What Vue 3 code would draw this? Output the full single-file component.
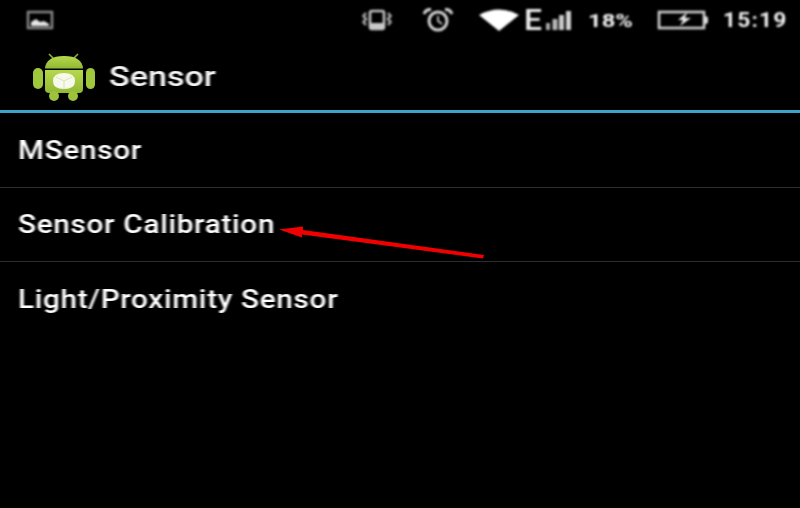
<template>
  <div class="screen">
    <div class="status-bar">
      <svg class="picture-icon" width="28" height="20" viewBox="0 0 28 20">
        <rect x="2" y="2" width="24" height="16" fill="none" stroke="#8c8c8c" stroke-width="2.4" />
        <path d="M5 16 L5 12 L10 9 L14 12 L18 11 L23 14 L23 16 Z" fill="#e6e6e6" />
      </svg>
      <div class="status-right">
        <svg class="vibrate-icon" width="30" height="22" viewBox="0 0 30 22">
          <rect x="8" y="2" width="14" height="18" rx="2" fill="none" stroke="#c4c4c4" stroke-width="2.6" />
          <rect x="8" y="14" width="14" height="6" fill="#c8c8c8" />
          <path d="M4 4 L1.500 7 L4 10 L1.500 13 L4 16 M26 4 L28.500 7 L26 10 L28.500 13 L26 16" fill="none" stroke="#a8a8a8" stroke-width="2.6" />
        </svg>
        <svg class="alarm-icon" width="32" height="24" viewBox="0 0 32 24">
          <circle cx="16" cy="13" r="9" fill="none" stroke="#d4d4d4" stroke-width="3" />
          <path d="M16 8 L16 13 L20 16" fill="none" stroke="#c4c4c4" stroke-width="1.800" />
          <path d="M2 6 Q4 1 9 1.500 M30 6 Q28 1 23 1.500" fill="none" stroke="#d4d4d4" stroke-width="3" />
        </svg>
        <svg class="wifi-icon" width="40" height="22" viewBox="0 0 40 22">
          <path d="M0 6 Q20 -5 40 6 L20 22 Z" fill="#fff" />
        </svg>
        <span class="network">E</span>
        <svg class="signal-icon" width="25" height="20" viewBox="0 0 25 20">
          <rect x="0" y="13" width="4" height="7" fill="#a8a8a8" />
          <rect x="6.500" y="9" width="5" height="11" fill="#b8b8b8" />
          <rect x="13" y="5" width="5" height="15" fill="#c8c8c8" />
          <rect x="20" y="1" width="5" height="19" fill="#d0d0d0" />
        </svg>
        <span class="percent">18%</span>
        <svg class="battery-icon" width="52" height="22" viewBox="0 0 52 22">
          <rect x="2" y="3" width="45" height="16" fill="none" stroke="#cfcfcf" stroke-width="2.6" />
          <path d="M47 7 Q51 7 51 9 L51 13 Q51 15 47 15" fill="#dcdcdc" />
          <path d="M30 3.500 L21 11 L26 11 L23 17 L34 9 L28 9 Z" fill="#ececec" />
        </svg>
        <span class="clock">15:19</span>
      </div>
    </div>

    <div class="action-bar">
      <svg class="app-icon" width="64" height="48" viewBox="0 0 64 48">
        <defs>
          <linearGradient id="droid" x1="0" y1="0" x2="0" y2="1">
            <stop offset="0" stop-color="#b4d94c" />
            <stop offset="1" stop-color="#93b934" />
          </linearGradient>
        </defs>
        <rect x="1" y="15" width="10" height="21" rx="5" fill="#a0c83c" />
        <rect x="54" y="15" width="9" height="21" rx="4.500" fill="#a0c83c" />
        <path d="M17 1 L21 5 M46 1 L42 5" stroke="#8fb334" stroke-width="1.600" />
        <path d="M13 15.500 Q14 3 32 3 Q50 3 51 15.500 Z" fill="url(#droid)" />
        <path d="M13 17 H51 V36 Q51 40 47 40 H17 Q13 40 13 36 Z" fill="url(#droid)" />
        <rect x="17" y="38" width="10" height="10" rx="5" fill="#9cc33b" />
        <rect x="36" y="38" width="10" height="10" rx="5" fill="#9cc33b" />
        <path d="M21 28 Q21 20 32 20 Q43 20 43 28 Q43 36 32 36 Q21 36 21 28 Z" fill="#f6f9ec" />
        <path d="M32 28 L32 36 M32 28 L24 24 M32 28 L40 24" stroke="#d8e6b4" stroke-width="1" />
      </svg>
      <span class="title">Sensor</span>
    </div>

    <ul class="menu">
      <li v-for="item in items" :key="item" class="menu-item">
        <span class="menu-label">{{ item }}</span>
      </li>
    </ul>

    <svg class="arrow" width="220" height="40" viewBox="0 0 220 40">
      <path d="M 11 7.500 L 35 4.500 L 35 8 L 216 33 L 215 36.500 L 34 12.500 L 34 15.500 Z" fill="#f00000" />
    </svg>
  </div>
</template>

<script setup>
const items = ['MSensor', 'Sensor Calibration', 'Light/Proximity Sensor']
</script>

<style>
html, body {
  margin: 0;
  background: #000;
}
</style>

<style scoped>
.screen {
  position: relative;
  width: 800px;
  height: 508px;
  overflow: hidden;
  background: #000;
  color: #f0f0f0;
  font-family: Roboto, "Liberation Sans", sans-serif;
}
.status-bar {
  height: 38px;
  display: flex;
  align-items: center;
  justify-content: space-between;
  padding: 2px 13px 0 26px;
  box-sizing: border-box;
  filter: blur(0.8px);
}
.status-right {
  display: flex;
  align-items: center;
}
.vibrate-icon {
  margin-right: 30px;
}
.alarm-icon {
  margin-right: 25px;
}
.network {
  display: inline-block;
  width: 17px;
  font-size: 29px;
  line-height: 30px;
  font-weight: 500;
  color: #eee;
  margin-left: 5px;
  margin-right: 5px;
  transform: scaleX(1.1);
  transform-origin: left center;
}
.signal-icon {
  margin-right: 17px;
}
.percent {
  display: inline-block;
  width: 45px;
  font-size: 19px;
  font-weight: 700;
  color: #f0f0f0;
  margin-right: 24px;
  transform: scaleX(1.25);
  transform-origin: left center;
}
.battery-icon {
  margin-right: 14px;
}
.clock {
  display: inline-block;
  width: 64px;
  font-size: 20px;
  font-weight: 700;
  letter-spacing: 1px;
  color: #f0f0f0;
  transform: scaleX(1.14);
  transform-origin: left center;
}
.action-bar {
  height: 72px;
  display: flex;
  align-items: center;
  padding-left: 32px;
  border-bottom: 3px solid #3ea3c9;
}
.app-icon {
  margin-right: 13px;
  margin-top: 5px;
  filter: blur(0.7px);
}
.title {
  display: inline-block;
  font-size: 27.5px;
  font-weight: 500;
  color: #f4f4f4;
  margin-top: 5px;
  transform: scaleX(1.24);
  transform-origin: left center;
  filter: blur(0.7px);
}
.menu {
  list-style: none;
  margin: 0;
  padding: 0;
}
.menu-item {
  height: 74.5px;
  display: flex;
  align-items: center;
  padding-left: 18px;
  box-sizing: border-box;
  font-size: 25.5px;
  font-weight: 500;
  letter-spacing: 0.6px;
  color: #fff;
  border-bottom: 1px solid #2e2e2e;
}
.menu-item:last-child {
  border-bottom: none;
}
.menu-label {
  display: inline-block;
  transform: scaleX(1.165);
  transform-origin: left center;
  filter: blur(0.7px);
}
.arrow {
  position: absolute;
  left: 268px;
  top: 222px;
  filter: blur(0.6px);
}
</style>
